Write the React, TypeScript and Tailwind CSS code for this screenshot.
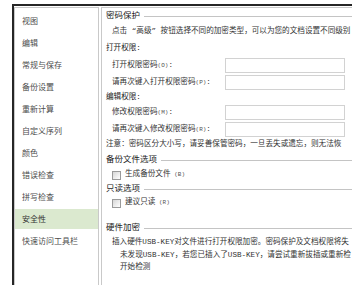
import React from 'react';

const navItems = ['视图', '编辑', '常规与保存', '备份设置', '重新计算', '自定义序列', '颜色', '错误检查', '拼写检查', '安全性', '快速访问工具栏'];

function Heading({ text, h }: { text: string; h: string }) {
  return (
    <div className={`flex items-center pl-[4px] whitespace-nowrap ${h}`}>
      <span className="text-[8.5px] text-[#222]">{text}</span>
      <div className="flex-1 h-px bg-[#c4c4c4] ml-[4px]" />
    </div>
  );
}

function InputRow({ label, k }: { label: string; k: string }) {
  return (
    <div className="flex items-center h-[17px] pl-[10px] whitespace-nowrap">
      <div className="w-[113px] text-[#333]">
        {label}
        <span className="text-[6px] text-[#555]">({k})</span>:
      </div>
      <div className="w-[120px] h-[15px] border border-[#d2d2d2] bg-white" />
    </div>
  );
}

function Check({ label, k }: { label: string; k: string }) {
  return (
    <div className="flex items-center h-[14px] pl-[10px] whitespace-nowrap">
      <div className="w-[9px] h-[9px] border border-[#9a9a9a] bg-linear-to-br from-[#d6d6d6] to-white" />
      <span className="ml-[4px] text-[#333]">
        {label}
        <span className="text-[6px] text-[#555]"> ({k})</span>
      </span>
    </div>
  );
}

export default function App() {
  return (
    <div className="w-[352px] h-[285px] bg-white overflow-hidden pt-[4px] pl-[12px] font-['Liberation_Mono','Noto_Sans_CJK_SC',monospace]">
      <div className="h-[290px] flex border-l-2 border-t-2 border-[#262626] pt-px">
        <div className="w-[85px] shrink-0 h-full border border-b-0 border-[#c9c9c9] pt-[2px] font-['Noto_Sans_CJK_SC',sans-serif]">
          {navItems.map((n) => (
            <div key={n} className="h-[22px] flex items-center">
              <div className={`h-[20px] w-full pl-[7px] flex items-center text-[8px] text-[#4d4d4d] ${n === '安全性' ? 'bg-[#dbe9cf] text-[#333]' : ''}`}>
                {n}
              </div>
            </div>
          ))}
        </div>
        <div className="ml-[2px] flex-1 min-w-0 h-full border-l border-t border-[#c9c9c9] text-[7.6px] leading-none">
          <Heading text="密码保护" h="h-[16px]" />
          <div className="flex items-center h-[16px] pl-[10px] whitespace-nowrap text-[#333]">
            点击 “高级” 按钮选择不同的加密类型，可以为您的文档设置不同级别
          </div>
          <div className="flex items-center h-[17px] pl-[4px] text-[#222]">打开权限:</div>
          <InputRow label="打开权限密码" k="O" />
          <InputRow label="请再次键入打开权限密码" k="P" />
          <div className="flex items-center h-[13px] pl-[4px] text-[#222]">编辑权限:</div>
          <InputRow label="修改权限密码" k="M" />
          <InputRow label="请再次键入修改权限密码" k="R" />
          <div className="flex items-center h-[14px] pl-[4px] whitespace-nowrap text-[#333]">
            注意：密码区分大小写，请妥善保管密码，一旦丢失或遗忘，则无法恢
          </div>
          <Heading text="备份文件选项" h="h-[16px]" />
          <Check label="生成备份文件" k="B" />
          <Heading text="只读选项" h="h-[14px]" />
          <Check label="建议只读" k="R" />
          <div className="h-[10px]" />
          <Heading text="硬件加密" h="h-[16px]" />
          <div className="flex items-center h-[14px] pl-[10px] whitespace-nowrap text-[#333]">
            插入硬件USB-KEY对文件进行打开权限加密。密码保护及文档权限将失
          </div>
          <div className="flex items-center h-[12px] pl-[18px] whitespace-nowrap text-[#333]">
            未发现USB-KEY，若您已插入了USB-KEY，请尝试重新拔插或重新检
          </div>
          <div className="flex items-center h-[12px] pl-[18px] whitespace-nowrap text-[#333]">开始检测</div>
        </div>
      </div>
    </div>
  );
}
